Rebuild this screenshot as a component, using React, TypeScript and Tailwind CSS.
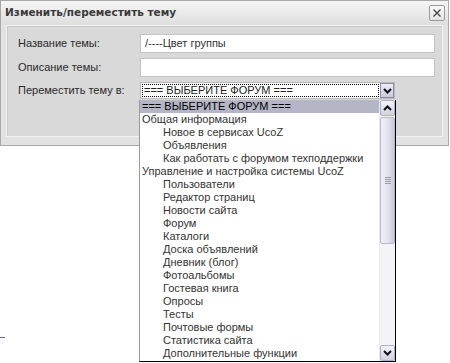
import React from "react";

const items: { t: string; l: number }[] = [
  { t: "=== ВЫБЕРИТЕ ФОРУМ ===", l: 0 },
  { t: "Общая информация", l: 0 },
  { t: "Новое в сервисах UcoZ", l: 1 },
  { t: "Объявления", l: 1 },
  { t: "Как работать с форумом техподдержки", l: 1 },
  { t: "Управление и настройка системы UcoZ", l: 0 },
  { t: "Пользователи", l: 1 },
  { t: "Редактор страниц", l: 1 },
  { t: "Новости сайта", l: 1 },
  { t: "Форум", l: 1 },
  { t: "Каталоги", l: 1 },
  { t: "Доска объявлений", l: 1 },
  { t: "Дневник (блог)", l: 1 },
  { t: "Фотоальбомы", l: 1 },
  { t: "Гостевая книга", l: 1 },
  { t: "Опросы", l: 1 },
  { t: "Тесты", l: 1 },
  { t: "Почтовые формы", l: 1 },
  { t: "Статистика сайта", l: 1 },
  { t: "Дополнительные функции", l: 1 },
];

const Chevron = ({ up }: { up?: boolean }) => (
  <svg width="9" height="6" viewBox="0 0 9 6">
    <path
      d={up ? "M1 5 L4.5 1.5 L8 5" : "M1 1 L4.5 4.5 L8 1"}
      fill="none"
      stroke="#111"
      strokeWidth="2"
    />
  </svg>
);

export default function App() {
  return (
    <div
      className="relative w-[450px] h-[363px] bg-white overflow-hidden text-[11px] text-[#333]"
      style={{ fontFamily: '"Liberation Sans", Arial, sans-serif' }}
    >
      {/* dialog */}
      <div className="w-[449px] h-[146px] border border-[#a8a8a8] bg-[#e2e2e2] flex flex-col">
        <div className="h-[24px] flex items-center justify-between pl-[4px] pr-[3px] bg-gradient-to-b from-[#f6f6f6] to-[#dedede]">
          <span
            className="font-bold text-[10.5px] text-[#3a3a3a]"
            style={{ fontFamily: '"DejaVu Sans", sans-serif' }}
          >
            Изменить/переместить тему
          </span>
          <div className="w-[16px] h-[16px] border border-[#9a9a9a] rounded-[2px] bg-gradient-to-b from-[#fafafa] to-[#e4e4e4] flex items-center justify-center">
            <svg width="10" height="10" viewBox="0 0 10 10">
              <path d="M1.5 1.5 L8.5 8.5 M8.5 1.5 L1.5 8.5" stroke="#444" strokeWidth="1.3" />
            </svg>
          </div>
        </div>
        <div className="mx-[5px] h-[112px] border border-[#f2f2f2] shadow-[inset_1px_1px_0_#c8c8c8] bg-[#d9d9d9] pl-[11px] pt-[8px] flex flex-col gap-[5px]">
          <div className="flex items-center h-[19px]">
            <span className="w-[122px] text-[#2a2a2a]">Название темы:</span>
            <div className="w-[295px] h-[19px] bg-white border border-[#c4c4c4] flex items-center pl-[4px] text-[#333]">
              /----Цвет группы
            </div>
          </div>
          <div className="flex items-center h-[19px]">
            <span className="w-[122px] text-[#2a2a2a]">Описание темы:</span>
            <div className="w-[295px] h-[19px] bg-white border border-[#c4c4c4]" />
          </div>
          <div className="flex items-center h-[17px]">
            <span className="w-[122px] text-[#2a2a2a]">Переместить тему в:</span>
            <div className="w-[255px] h-[17px] bg-white border border-[#b8b8b8] flex items-stretch">
              <div className="flex-1 m-[1px] border border-dotted border-black flex items-center pl-[1px] text-[#222]">
                === ВЫБЕРИТЕ ФОРУМ ===
              </div>
              <div className="w-[14px] border border-[#8c8ca4] bg-gradient-to-b from-[#eeeef8] to-[#c8c8dc] flex items-center justify-center">
                <Chevron />
              </div>
            </div>
          </div>
        </div>
      </div>

      {/* small artifact at left */}
      <div className="absolute left-0 top-[337px] w-[5px] h-px bg-[#5a6a8a]" />

      {/* dropdown list */}
      <div className="absolute left-[139px] top-[100px] w-[257px] h-[262px] bg-white border-l border-[#9a9a9a] border-r border-b border-r-black border-b-black flex">
        <div className="flex-1 flex flex-col">
          {items.map((it, i) => (
            <div
              key={i}
              className={`h-[13px] leading-[13px] whitespace-nowrap overflow-hidden text-[#333] ${
                i === 0 ? "bg-[#b4b6c6] text-black" : ""
              } ${it.l ? "pl-[23px]" : "pl-[2px]"}`}
            >
              {it.t}
            </div>
          ))}
        </div>
        <div className="w-[16px] flex flex-col bg-[#f4f4f8] border-l border-[#e8e8ee]">
          <div className="h-[16px] border border-[#b0b0c4] rounded-[2px] bg-gradient-to-b from-[#f4f4fc] to-[#d0d0e0] flex items-center justify-center">
            <Chevron up />
          </div>
          <div className="h-[127px] mt-[1px] border border-[#b8b8cc] rounded-[2px] bg-gradient-to-r from-[#f0f0f8] via-[#e4e4f0] to-[#c8c8da] flex items-center justify-center">
            <div className="flex flex-col gap-[1px]">
              <div className="w-[6px] h-px bg-[#9a9ab0]" />
              <div className="w-[6px] h-px bg-[#9a9ab0]" />
              <div className="w-[6px] h-px bg-[#9a9ab0]" />
              <div className="w-[6px] h-px bg-[#9a9ab0]" />
            </div>
          </div>
          <div className="flex-1" />
          <div className="h-[16px] border border-[#b0b0c4] rounded-[2px] bg-gradient-to-b from-[#f4f4fc] to-[#d0d0e0] flex items-center justify-center">
            <Chevron />
          </div>
        </div>
      </div>
    </div>
  );
}
